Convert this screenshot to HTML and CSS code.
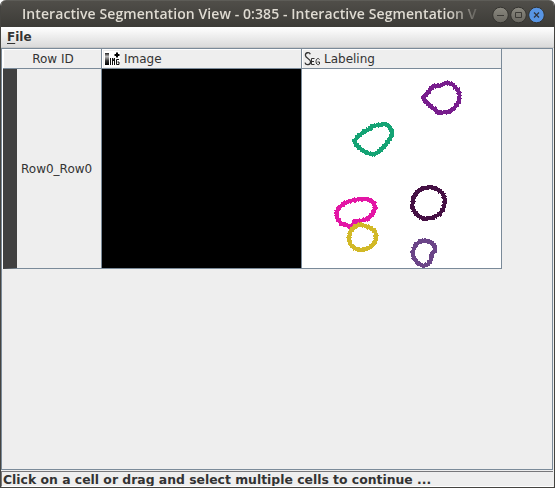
FILE: index.html
```html
<!DOCTYPE html>
<html lang="en">
<head>
<meta charset="utf-8">
<title>Interactive Segmentation View</title>
<link rel="stylesheet" href="styles.css">
</head>
<body>
<div class="window">
  <header class="titlebar">
    <div class="title"><span>Interactive Segmentation View - 0:385 - Interactive Segmentation V</span></div>
    <svg class="controls" width="56" height="18" viewBox="0 0 56 18">
      <defs><linearGradient id="btn" x2="0" y2="1"><stop stop-color="#8b8980"/><stop offset="1" stop-color="#68665f"/></linearGradient></defs>
      <g stroke="#34332f"><circle cx="9.5" cy="9" r="7.8" fill="url(#btn)"/><circle cx="27.5" cy="9" r="7.8" fill="url(#btn)"/><circle cx="45.5" cy="9" r="7.8" fill="#5895e4"/></g>
      <g fill="none" stroke="#3b3a36"><path d="M6 9.5h7M24.5 6.500h6v5h-6z"/><path d="M43 6.500l5 5m0-5l-5 5" stroke="#303540" stroke-width="1.3"/></g>
    </svg>
  </header>
  <nav class="menubar"><span class="menu"><u>F</u>ile</span></nav>
  <main class="scrollpane">
    <div class="table">
      <div class="head center">Row ID</div>
      <div class="head">
        <svg class="icon" width="16" height="16" viewBox="0 0 16 16">
          <defs><linearGradient id="bar" x2="0" y2="1"><stop stop-color="#222"/><stop offset=".3" stop-color="#bbb"/><stop offset=".65" stop-color="#333"/><stop offset="1" stop-color="#000"/></linearGradient></defs>
          <path fill="#fff" d="M0 0h16v16H0z"/><path fill="url(#bar)" d="M1 2h4v12H1z"/>
          <path fill="none" stroke="#111" d="M6.500 7v7M8.500 14V7l1 3 1-3v7M15 8.500h-2.500v5H15V11h-1.500"/>
          <path stroke="#000" stroke-width="2" d="M10.500 4h5M13 1.500v5"/>
        </svg>
        <span>Image</span>
      </div>
      <div class="head">
        <svg class="icon" width="16" height="16" viewBox="0 0 16 16" fill="none" stroke="#333">
          <path stroke-width="1.3" d="M6.300 3.200C5.500 1 1.400 1.200 1.400 4.200c0 3.300 5.200 3.200 5.200 6.600 0 3.600-4.800 3.700-5.600.8"/>
          <path d="M10.500 7.500h-3v6h3M7.500 10.500h2.500M15.500 8.500c-1-1.800-3.500-1-3.500 2s2.500 4 3.500 2.500v-2h-2"/>
        </svg>
        <span>Labeling</span>
      </div>
      <div class="rowid"><span>Row0_Row0</span></div>
      <div class="image"></div>
      <div class="labeling">
        <svg width="199" height="199" viewBox="302 69 199 199" shape-rendering="crispEdges">
          <defs>
            <path id="c1" d="M39 84L46 75L53 71L58 61L69 48L90 47L105 40L116 39L129 44L135 52L144 59L149 76L145 98L132 115L115 127L84 128L75 117L65 113L55 101L47 96Z"/>
            <path id="c2" d="M27 87L43 70L58 58L76 50L80 42L105 39L120 35L130 42L139 52L142 66L133 83L122 98L109 112L94 124L83 128L70 124L56 118L42 106L34 98Z"/>
            <path id="c3" d="M78 127L87 118L87 109L105 108L127 102L143 87L150 69L147 53L132 44L104 42L79 47L59 54L43 67L34 83L37 100L48 115L62 119Z"/>
            <path id="c4" d="M90 124L107 118L124 124L139 130L151 140L154 158L147 177L132 188L110 196L89 190L75 177L72 158L77 137Z"/>
            <path id="c5" d="M48 54L64 42L89 36L112 43L128 55L136 78L130 101L118 118L98 128L75 132L56 124L43 110L37 92L40 68Z"/>
            <path id="c6" d="M48 209L61 199L76 196L93 202L105 214L103 229L94 239L94 252L85 267L69 273L52 264L42 249L38 235L42 219Z"/>
          </defs>
          <g class="cell purple" transform="translate(410 70) scale(.33333)"><use href="#c1"/><use class="rough" href="#c1"/></g>
          <g class="cell green" transform="translate(345 112) scale(.33333)"><use href="#c2"/><use class="rough" href="#c2"/></g>
          <g class="cell pink" transform="translate(325 185) scale(.33333)"><use href="#c3"/><use class="rough" href="#c3"/></g>
          <g class="cell yellow" transform="translate(325 185) scale(.33333)"><use href="#c4"/><use class="rough" href="#c4"/></g>
          <g class="cell plum" transform="translate(400 175) scale(.33333)"><use href="#c5"/><use class="rough" href="#c5"/></g>
          <g class="cell violet" transform="translate(400 175) scale(.33333)"><use href="#c6"/><use class="rough" href="#c6"/></g>
        </svg>
      </div>
    </div>
  </main>
  <footer class="status">Click on a cell or drag and select multiple cells to continue ...</footer>
</div>
</body>
</html>
```

FILE: styles.css
```css
* { box-sizing: border-box; }
body {
  margin: 0;
  background: #fff;
  color: #333;
  font: 12px/18px "DejaVu Sans", sans-serif;
}
.window {
  display: flex;
  flex-direction: column;
  width: 555px;
  height: 488px;
  border: 1px solid #454440;
  border-top: 0;
  border-radius: 6px 6px 0 0;
  background: #eee;
  overflow: hidden;
}
.titlebar {
  display: flex;
  align-items: center;
  flex: none;
  height: 27px;
  padding-left: 21px;
  background: linear-gradient(#504e49, #3c3b37);
  border-top: 1px solid #5d5c57;
}
.title {
  width: 458px;
  overflow: hidden;
  white-space: nowrap;
  color: #dfdbd2;
  font: 600 14px/24px "Open Sans", sans-serif;
  letter-spacing: .08px;
  mask-image: linear-gradient(90deg, #000 425px, transparent 462px);
}
.controls { margin-left: 11px; margin-top: 1px; }
.menubar {
  flex: none;
  height: 21px;
  padding-left: 6px;
  background: linear-gradient(#fff, #dadada);
  border-bottom: 1px solid #c8c8c8;
  font-weight: bold;
  line-height: 20px;
}
.menu u { text-underline-offset: 2px; }
.scrollpane {
  flex: none;
  height: 422px;
  border: 1px solid #7a8a99;
  margin-right: 1px;
}
.table {
  display: grid;
  grid-template-columns: 99px 200px 200px;
  grid-template-rows: 20px 200px;
  width: 500px;
  border-left: 1px solid #fff;
}
.table > div { border-right: 1px solid #7a8a99; border-bottom: 1px solid #7a8a99; }
.head {
  display: flex;
  align-items: center;
  gap: 4px;
  padding-left: 2px;
  box-shadow: inset 1px 1px #fff;
}
.head.center { justify-content: center; }
.icon { display: block; }
.rowid {
  display: flex;
  align-items: center;
  padding-left: 4px;
  border-left: 14px solid #404040;
}
.image { background: #000; }
.labeling { background: #fff; }
.labeling svg { display: block; }
.cell { fill: none; stroke-width: 12; stroke-linejoin: round; }
.rough { stroke-width: 16; stroke-dasharray: 4 9 3 6 5 12; }
.purple { stroke: #781d8d; }
.green { stroke: #14a374; }
.pink { stroke: #e316a5; }
.yellow { stroke: #d2b927; }
.plum { stroke: #451044; }
.violet { stroke: #6b4588; }
.status {
  flex: none;
  height: 16px;
  margin: 1px 1px 0 0;
  padding-left: 1px;
  border-top: 1px solid #77777a;
  border-left: 1px solid #77777a;
  border-bottom: 1px solid #fff;
  font-weight: bold;
  font-size: 12.4px;
  line-height: 16px;
  white-space: nowrap;
  overflow: hidden;
}
```
